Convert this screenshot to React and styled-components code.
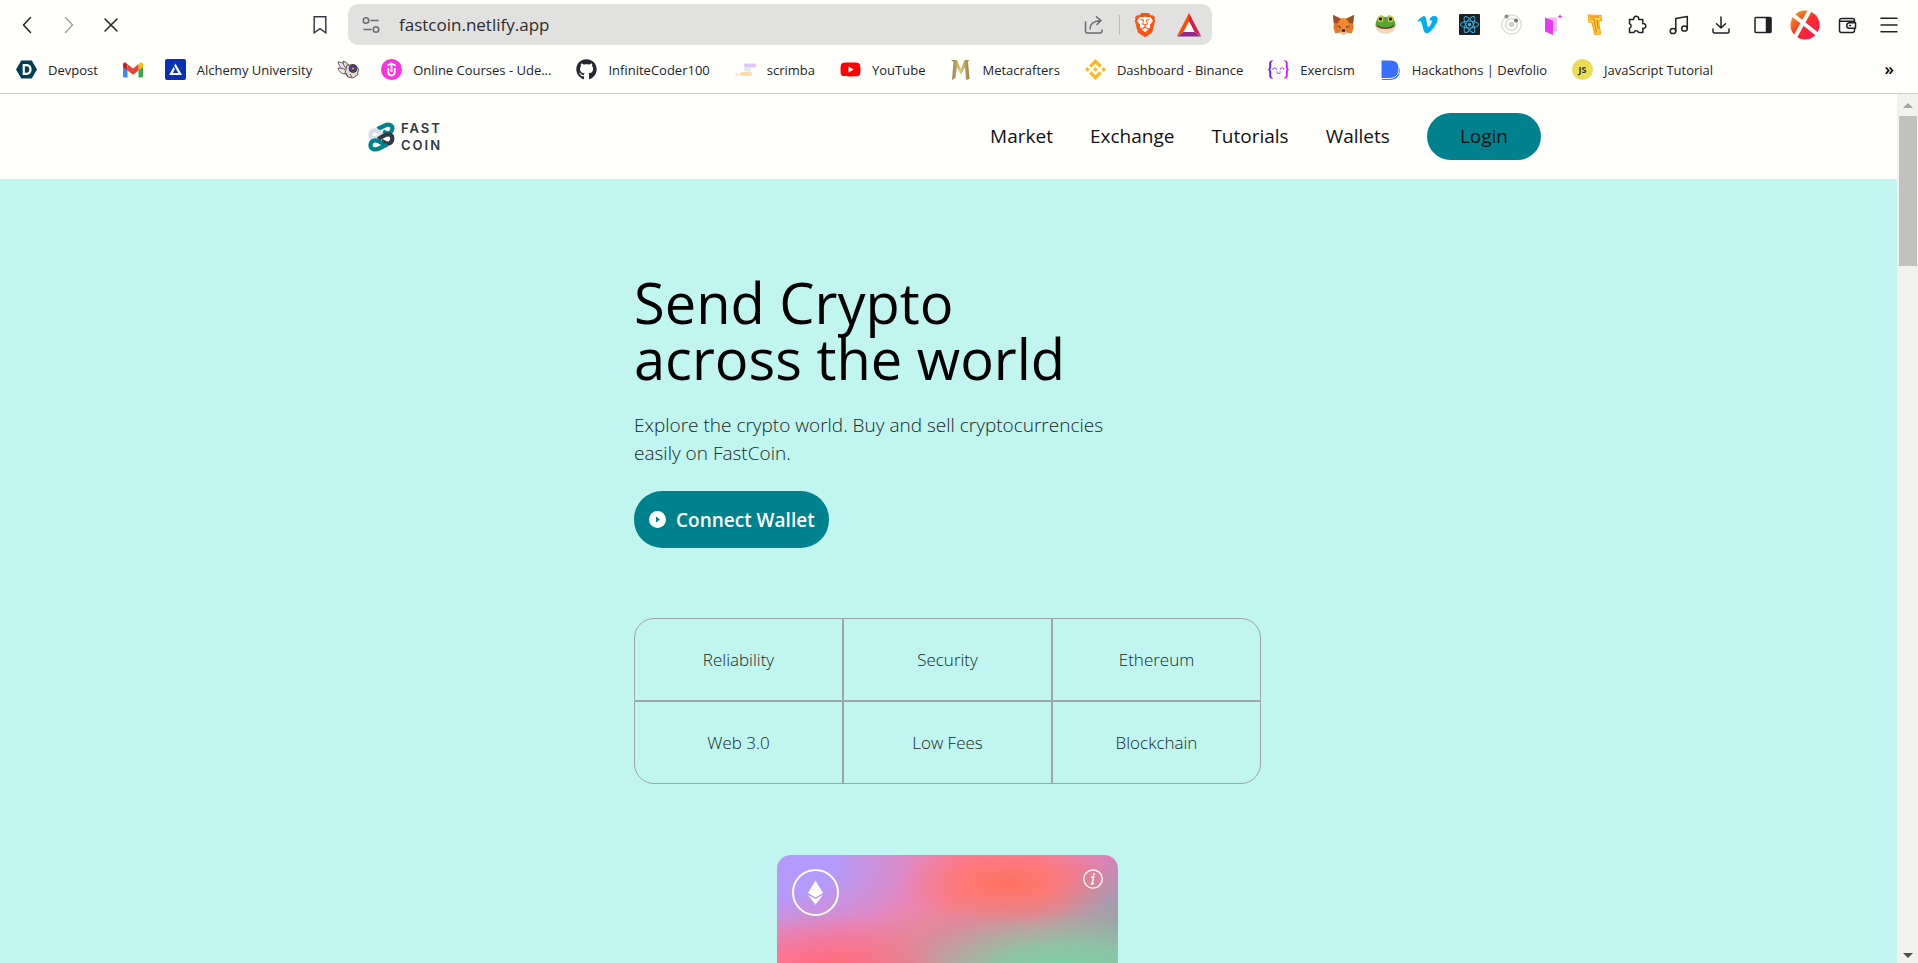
import React from "react";
import styled, { createGlobalStyle } from "styled-components";
import {
  SiDevpost,
  SiBinance,
  SiExercism,
  SiBrave,
  SiReact,
} from "react-icons/si";
import { FaYoutube, FaGithub, FaVimeoV } from "react-icons/fa";

const GlobalStyle = createGlobalStyle`
  * { box-sizing: border-box; }
  body {
    margin: 0;
    font-family: "Open Sans", "Noto Sans", sans-serif;
    color: #000;
    background: #fffffb;
  }
  button, input { font: inherit; color: inherit; }
  a { color: inherit; text-decoration: none; }
`;

/* ---------- browser frame ---------- */

const Window = styled.div`
  display: flex;
  flex-direction: column;
  height: 100vh;
  overflow: hidden;
`;

const Chrome = styled.header`
  flex: none;
  border-bottom: 1px solid #c8c8c6;
`;

const Toolbar = styled.div`
  display: flex;
  align-items: center;
  height: 46px;
  padding: 4px 8px 1px 6px;
`;

const ButtonGroup = styled.div`
  display: flex;
  align-items: center;
  margin-right: ${(p) => (p.$wide ? "167px" : "0")};
  margin-left: ${(p) => (p.$end ? "auto" : "0")};
`;

const ToolButton = styled.button`
  display: flex;
  align-items: center;
  justify-content: center;
  flex: none;
  width: ${(p) => (p.$wide ? "44px" : "42px")};
  height: 40px;
  padding: 0;
  border: 0;
  background: none;
  color: ${(p) => p.$color || "#202124"};
`;

const AddressBar = styled.div`
  display: flex;
  align-items: center;
  flex: 0 1 864px;
  height: 41px;
  margin-left: 7px;
  padding: 0 1px 0 2px;
  border-radius: 10px;
  background: #e1e1df;
`;

const AddressInput = styled.input`
  flex: 1;
  min-width: 0;
  padding: 0 7px;
  border: 0;
  outline: 0;
  background: none;
  font-size: 17px;
  color: #2b2c2e;
`;

const Divider = styled.span`
  width: 1px;
  height: 20px;
  margin: 0 3px;
  background: #bcbcba;
`;

const BookmarkBar = styled.nav`
  display: flex;
  align-items: center;
  gap: 22px;
  height: 47px;
  padding: 0 24px 0 16px;
`;

const Bookmark = styled.a`
  display: flex;
  align-items: center;
  gap: 11px;
  flex: none;
  font-size: 13px;
  line-height: 20px;
  color: #222325;
  white-space: nowrap;
  svg { flex: none; }
  span { padding-right: 3px; }
`;

const MoreButton = styled.button`
  margin-left: auto;
  padding: 0 0 2px;
  border: 0;
  background: none;
  font-size: 17px;
  font-weight: 600;
  line-height: 20px;
`;

const Viewport = styled.div`
  display: flex;
  flex: 1;
  min-height: 0;
`;

const ScrollTrack = styled.div`
  display: flex;
  flex-direction: column;
  align-items: center;
  flex: none;
  width: 21px;
  padding: 9px 1px 5px 2px;
  background: #f1f1ef;
`;

const ScrollThumb = styled.div`
  align-self: stretch;
  height: 150px;
  margin-top: 8px;
  margin-bottom: auto;
  background: #c1c1bf;
`;

/* ---------- site ---------- */

const Page = styled.div`
  flex: 1;
  min-width: 0;
  overflow: hidden;
  background: #c1f5f0;
`;

const SiteHeader = styled.header`
  display: flex;
  align-items: center;
  justify-content: space-between;
  height: 85px;
  padding: 0 356px 0 368px;
  background: #fffffb;
`;

const Logo = styled.a`
  display: flex;
  align-items: center;
  gap: 6px;
`;

const LogoName = styled.span`
  display: flex;
  flex-direction: column;
  font-family: Inter, "Open Sans", sans-serif;
  font-size: 13px;
  font-weight: 600;
  line-height: 17px;
  letter-spacing: 2px;
  color: #2f3944;
`;

const SiteNav = styled.nav`
  display: flex;
  align-items: center;
  gap: 37px;
  font-size: 19px;
  line-height: 28px;
  color: #111;
`;

const NavLink = styled.a`
  padding-bottom: 2px;
`;

const LoginButton = styled.button`
  height: 47px;
  padding: 0 33px 2px;
  border: 0;
  border-radius: 24px;
  background: #00828e;
`;

const Hero = styled.main`
  display: flex;
  flex-direction: column;
  align-items: flex-start;
  width: 629px;
  max-width: 100%;
  margin: 0 auto;
  padding: 95px 2px 0 0;
`;

const Title = styled.h1`
  margin: 0 0 25px;
  font-size: 56px;
  font-weight: 400;
  line-height: 56px;
`;

const Intro = styled.p`
  max-width: 500px;
  margin: 0 0 24px;
  font-size: 19px;
  font-weight: 300;
  line-height: 28px;
  color: #182626;
`;

const ConnectButton = styled.button`
  display: flex;
  align-items: center;
  gap: 10px;
  height: 57px;
  padding: 0 14px 0 15px;
  border: 0;
  border-radius: 28px;
  background: #00828e;
  color: #fffffb;
  font-size: 19px;
  font-weight: 600;
`;

const Features = styled.ul`
  display: grid;
  grid-template-columns: repeat(3, 1fr);
  align-self: stretch;
  margin: 70px 0 71px;
  padding: 0;
  list-style: none;
`;

const Feature = styled.li`
  display: flex;
  align-items: center;
  justify-content: center;
  height: 83px;
  border: 1px solid #9ea3ae;
  border-radius: ${(p) => p.$radius || "0"};
  font-size: 17px;
  font-weight: 300;
  color: #182626;
`;

const CoinCard = styled.section`
  display: flex;
  align-items: flex-start;
  justify-content: space-between;
  align-self: center;
  width: 341px;
  height: 215px;
  padding: 14px 15px;
  border-radius: 14px;
  color: #fffffb;
  background:
    radial-gradient(ellipse 110px 42px at 230px 28px, #ff7260 0%, #ff7462bb 30%, #ff746200 100%),
    radial-gradient(ellipse 110px 60px at 55px 118px, #ff6a7c 0%, #ff6a7c00 100%),
    radial-gradient(ellipse 235px 92px at 285px 118px, #76d7a4 0%, #80cda5dd 30%, #a8a39c77 65%, #c0989a00 100%),
    radial-gradient(ellipse 90px 62px at 350px 66px, #8aa6b8 0%, #9c9db600 100%),
    radial-gradient(ellipse 90px 100px at 350px 0px, #cb85c0 0%, #cb85c000 100%),
    radial-gradient(ellipse 190px 100px at 0px 10px, #b49afb 0%, #b49afb 30%, #b49afb00 100%),
    #ff7c9a;
`;

/* ---------- icons ---------- */

const Line = ({ size = 20, width = 1.5, children, ...rest }) => (
  <svg
    width={size}
    height={size}
    viewBox="0 0 20 20"
    fill="none"
    stroke="currentColor"
    strokeWidth={width}
    strokeLinejoin="round"
    strokeLinecap="round"
    aria-hidden="true"
    {...rest}
  >
    {children}
  </svg>
);

const BackIcon = () => <Line><path d="M13.5 2.5 6.5 10l7 7.5" /></Line>;
const ForwardIcon = () => <Line><path d="m6.500 2.500 7 7.500-7 7.500" /></Line>;
const StopIcon = () => <Line><path d="m4 4 12 12M16 4 4 16" /></Line>;
const BookmarkIcon = () => (
  <Line><path strokeLinejoin="miter" d="M4.200 1.800h11.600v16L10 13.600 4.200 17.800z" /></Line>
);
const SiteInfoIcon = () => (
  <Line width={1.6}>
    <circle cx="5" cy="5.500" r="2.700" />
    <path d="M10 5.500h7M3 14.500h7" />
    <circle cx="15" cy="14.500" r="2.700" />
  </Line>
);
const ShareIcon = () => (
  <Line size={20}>
    <path d="M1.500 7v9a2 2 0 0 0 2 2h12.500a2 2 0 0 0 2-2v-1" />
    <path d="M6 14c0-5 3.500-8 10.500-8.500M12.500 1.800l4.500 3.700-4 4" />
  </Line>
);
const BraveIcon = () => (
  <svg width="24" height="24" viewBox="0 0 24 24" aria-hidden="true">
    <path d="M5 4h14l1.500 8-3 7L12 22l-5.500-3-3-7z" fill="#fff" />
    <SiBrave size={24} color="#fb5412" />
  </svg>
);
const BatIcon = () => (
  <svg width="24" height="24" viewBox="0 0 24 24" aria-hidden="true">
    <path d="M12 0 0 23l6.500-4L12 8.500z" fill="#ff4a00" />
    <path d="M12 0v8.500L17.500 19l6.500 4z" fill="#d1204f" />
    <path d="M0 23.500 6.500 19h11l6.500 4.500z" fill="#8f2a92" />
    <path d="m12 8.500-5.500 10.500h11z" fill="#fff" />
  </svg>
);
const FoxIcon = () => (
  <svg width="21" height="21" viewBox="0 0 21 21" aria-hidden="true">
    <path d="m0 1 8 3.500h5L21 1l-1 8 .6 5-2 5.500-5-1-2 2H9.400l-2-2-5 1L.4 14 1 9z" fill="#e8792a" />
    <path d="m0 1 8 4-3 4-4.200.500zM21 1l-8 4 3 4 4.200.500z" fill="#9c4d2b" />
    <path d="m5 9 3-4.500h5L16 9l-2 6H7z" fill="#f08a2c" />
    <path d="m4 11.500 4 1.200-.5 1.500zM17 11.500l-4 1.200.5 1.500z" fill="#3a3a4a" />
    <path d="m7.500 17 1.500-1h3l1.500 1-1 3h-4z" fill="#d8c4b4" />
    <path d="M9 15.500h3l.4 2.200H8.600z" fill="#222831" />
  </svg>
);
const FrogIcon = () => (
  <svg width="21" height="21" viewBox="0 0 21 21" aria-hidden="true">
    <ellipse cx="10.500" cy="12.500" rx="10" ry="7.500" fill="#eed9bd" />
    <path d="M.5 11.500C.500 8 1.500 7 2 5.500a4 4 0 0 1 7-2.500 6 6 0 0 1 3 0 4 4 0 0 1 7 2.500c.5 1.500 1.500 2.500 1.500 6-2 3.500-18 3.500-20 0z" fill="#51a832" />
    <circle cx="5.500" cy="5" r="2.900" fill="#e7d24a" />
    <circle cx="15.500" cy="5" r="2.900" fill="#e7d24a" />
    <circle cx="5.500" cy="5" r="1.800" fill="#222" />
    <circle cx="15.500" cy="5" r="1.800" fill="#222" />
    <path d="M2 11.500c3 3.600 14 3.600 17 0" fill="none" stroke="#81342e" strokeWidth="1.400" />
  </svg>
);
const VimeoIcon = () => (
  <svg width="21" height="21" viewBox="0 0 21 21" aria-hidden="true">
    <FaVimeoV x="-1" y="-1" size={23} color="#00adef" />
  </svg>
);
const ReactTile = () => (
  <svg width="21" height="21" viewBox="0 0 21 21" aria-hidden="true">
    <rect width="21" height="21" rx="1" fill="#202022" />
    <SiReact x="1" y="1" size={19} color="#38b6e8" />
  </svg>
);
const OrbitIcon = () => (
  <svg width="21" height="21" viewBox="0 0 21 21" fill="none" aria-hidden="true">
    <circle cx="10.500" cy="10.500" r="9.700" stroke="#d8d8d6" strokeWidth="1.300" />
    <circle cx="10.500" cy="10.500" r="5.800" stroke="#d0d0ce" strokeWidth="1.300" />
    <circle cx="10.500" cy="10.500" r="2.800" fill="#d0d0ce" />
    <circle cx="5.500" cy="2.500" r="2" fill="#8c8c8c" />
    <circle cx="15" cy="6.500" r="2" fill="#777" />
  </svg>
);
const DoorIcon = () => (
  <svg width="21" height="21" viewBox="0 0 21 21" aria-hidden="true">
    <path d="M5 3.500h9V17H5z" fill="#f3b7f4" />
    <path d="m2 3.500 8 3.200V21l-8-3.500z" fill="#e63af0" />
    <path d="m17 0 .7 1.800 1.800.700-1.800.700L17 5l-.7-1.800-1.800-.7 1.800-.7z" fill="#d83be0" />
  </svg>
);
const HammerIcon = () => (
  <svg width="21" height="21" viewBox="0 0 21 21" aria-hidden="true">
    <path d="m3.500 1 12.500.500.5 5-3 .8 2 12.700-5.500.5L7 8.500l-3-.5z" fill="#ffd83a" stroke="#f9a01f" strokeWidth="1.200" />
    <path d="M5 3h9.500M5.500 5.500l3.500-.500 2.500 13.500M12 6l1 9" fill="none" stroke="#ee6a1e" strokeWidth="1" />
  </svg>
);
const PuzzleIcon = () => (
  <Line>
    <path d="M2.500 4.500h4.200a2.600 2.600 0 1 1 5 0h4.100v4.200a2.400 2.400 0 1 1 0 4.600v4.200h-4.200a2.500 2.500 0 0 0-4.700 0H2.500v-4.300a2.300 2.300 0 0 0 0-4.400z" />
  </Line>
);
const MusicIcon = () => (
  <Line>
    <ellipse cx="4" cy="16" rx="2.800" ry="2.600" />
    <ellipse cx="15.500" cy="13.500" rx="2.800" ry="2.600" />
    <path d="M6.800 16V3.500l11.500-2v12" />
  </Line>
);
const DownloadIcon = () => (
  <Line><path d="M10 2v11m-4.500-4.200L10 13l4.500-4.200M2 14v2.500A1.500 1.500 0 0 0 3.500 18h13a1.500 1.500 0 0 0 1.500-1.500V14" /></Line>
);
const SidebarIcon = () => (
  <Line><rect x="2" y="2.500" width="16" height="15" rx="1" /><path d="M13.500 3h4v14h-4z" fill="currentColor" /></Line>
);
const ProfileIcon = () => (
  <svg width="30" height="30" viewBox="0 0 30 30" aria-hidden="true">
    <defs>
      <linearGradient id="profile" x1="0" y1="0" x2="1" y2="1">
        <stop offset="0.150" stopColor="#f78a1f" />
        <stop offset="0.500" stopColor="#fb2b2b" />
        <stop offset="1" stopColor="#ff1560" />
      </linearGradient>
    </defs>
    <circle cx="15" cy="15" r="14.500" fill="url(#profile)" />
    <path d="m3 5 24 19M20 0 4 29" stroke="#fffffb" strokeWidth="4" />
  </svg>
);
const WalletIcon = () => (
  <Line>
    <path d="M17.500 7V5.500a2 2 0 0 0-2-2h-11a2 2 0 0 0-2 2v10a2 2 0 0 0 2 2h11a2 2 0 0 0 2-2V14M2.500 6.200h15" />
    <path d="M18.500 7.800h-6a2.700 2.700 0 0 0 0 5.500h6z" /><path d="M12.500 10.500h1" />
  </Line>
);
const MenuIcon = () => <Line><path d="M2 3.200h16M2 10h16M2 16.800h16" /></Line>;

const GmailIcon = () => (
  <svg width="20" height="20" viewBox="0 0 20 20" aria-hidden="true">
    <path d="M0 5.500 4.500 8v9.500h-3A1.500 1.500 0 0 1 0 16z" fill="#4285f4" />
    <path d="M20 5.500 15.500 8v9.500h3A1.500 1.500 0 0 0 20 16z" fill="#34a853" />
    <path d="M15.500 4.500 17 3c1.500-1 3 0 3 1.700V7l-4.500 3.500z" fill="#fbbc04" />
    <path d="M0 7V4.700C0 3 1.500 2 3 3l1.500 1.500v6z" fill="#c5221f" />
    <path d="M4.500 4.200 10 8.500l5.500-4.300v6.300L10 14.700l-5.500-4.200z" fill="#ea4335" />
  </svg>
);
const AlchemyIcon = () => (
  <svg width="21" height="21" viewBox="0 0 21 21" aria-hidden="true">
    <rect width="21" height="21" rx="2" fill="#0731b5" />
    <path d="M10.500 4.500 17 16h-2.600L9.200 6.800zM8.600 8l1.300 2.300-2.100 3.700h5.300l1.200 2H4.100z" fill="#fffffb" />
  </svg>
);
const BeeIcon = () => (
  <svg width="22" height="20" viewBox="0 0 22 20" stroke="#3d3538" strokeWidth="0.800" aria-hidden="true">
    <path d="M1 2c5 0 8 3 10 6l-2 3C5 10 2 6 1 2z" fill="#e9e2e0" />
    <path d="M6 1c4 1 6 4 7 7l-3 1C7 7 6 4 6 1z" fill="#e4dede" />
    <path d="M1 8c4 0 7 1 9 3l-2 3c-3 0-6-2-7-6z" fill="#efe9e4" />
    <path d="M10 5h8l3.500 4-1 6-4.500 3-5-1-3-4z" fill="#e3d9d4" />
    <circle cx="16" cy="8.500" r="4" fill="#4a3a9a" />
    <circle cx="16" cy="8.500" r="1.500" fill="#e6b83a" />
    <path d="m9 13 2 4M13 14l2 3" fill="none" />
  </svg>
);
const UdemyIcon = () => (
  <svg width="21" height="21" viewBox="0 0 21 21" aria-hidden="true">
    <circle cx="10.500" cy="10.500" r="10.500" fill="#f733e0" />
    <path d="M6.300 6.800 10.500 4.300l4.200 2.500M7.300 9v4.300a3.200 3.200 0 0 0 6.400 0V9M10.500 4.500v8.500" fill="none" stroke="#fffffb" strokeWidth="1.800" />
  </svg>
);
const ScrimbaIcon = () => (
  <svg width="21" height="20" viewBox="0 0 21 20" aria-hidden="true">
    <rect x="9" y="3.500" width="12" height="4" rx="1.500" fill="#e0c5fa" />
    <rect x="9" y="8" width="7" height="3.500" rx="1.500" fill="#d8eee6" />
    <rect x="5" y="12" width="12" height="4" rx="1.500" fill="#fbdcae" />
    <circle cx="2" cy="14.500" r="1.700" fill="#fbe3c0" />
  </svg>
);
const MetaIcon = () => (
  <svg width="21" height="22" viewBox="0 0 21 22" aria-hidden="true">
    <defs>
      <linearGradient id="gold"><stop stopColor="#8f7b3e" /><stop offset="0.500" stopColor="#dcc980" /><stop offset="1" stopColor="#97813e" /></linearGradient>
    </defs>
    <path d="M1 1h6l4 9 3.500-9H19l-1 2 1.500 17-3.500 1-1-13-4 8-4-8L5.500 19 2 21l1.500-18z" fill="url(#gold)" />
  </svg>
);
const ExercismIcon = () => (
  <svg width="21" height="21" viewBox="0 0 21 21" aria-hidden="true">
    <defs>
      <linearGradient id="exercism" x1="0" x2="1"><stop offset="0.200" stopColor="#6a1bf5" /><stop offset="0.900" stopColor="#d41de8" /></linearGradient>
    </defs>
    <SiExercism size={21} fill="url(#exercism)" />
  </svg>
);
const DevfolioIcon = () => (
  <svg width="21" height="22" viewBox="0 0 21 22" aria-hidden="true">
    <path d="M2 19v2h8c6 0 10-4 10-10V9z" fill="#3770ff" />
    <path d="M1 1h9c6 0 9 3 9 9s-4 9.500-10 9.500H1z" fill="#3770ff" stroke="#fffffb" strokeWidth="1" />
  </svg>
);
const JsIcon = () => (
  <svg width="21" height="21" viewBox="0 0 21 21" aria-hidden="true">
    <circle cx="10.500" cy="10.500" r="10.500" fill="#ecdb54" />
    <text x="10.500" y="14" textAnchor="middle" fontSize="9" fontWeight="700" fill="#33321e">JS</text>
  </svg>
);

const FastCoinMark = () => (
  <svg width="27" height="30" viewBox="0 0 27 30" fill="none" strokeWidth="4.200" strokeLinejoin="round" aria-hidden="true">
    <path d="M9.500 7 17 3.500c4-2 7.800 0 7.300 3.500-.4 3.300-3.300 5-6.300 4l-3-1.500" stroke="#00828e" />
    <path d="M16 12.500 9.500 15.500c-4 2-7.300.5-7-3C2.800 9 5.800 7.500 9 8.800l4 2" stroke="#d5dde9" />
    <path d="m10 17 7-3.800c4-2 7.800 0 7.300 3.800-.4 4-3.800 5.500-7 4l-4-2" stroke="#2f3944" />
    <path d="m19 22.500-8 4c-4.500 2-8.800.5-8.500-3.500.300-4 4-5.500 7.500-4l5 2.700" stroke="#00828e" />
  </svg>
);
const PlayIcon = () => (
  <svg width="17" height="17" viewBox="0 0 17 17" aria-hidden="true">
    <circle cx="8.500" cy="8.500" r="8.500" fill="#fffffb" />
    <path d="m7 5.500 4 3-4 3z" fill="#00828e" />
  </svg>
);
const EthereumBadge = () => (
  <svg width="47" height="47" viewBox="0 0 47 47" aria-hidden="true">
    <circle cx="23.500" cy="23.500" r="22.500" fill="none" stroke="#fffffb" strokeWidth="2" />
    <path d="M23.500 11.500 31 24l-7.500 4.500L16 24z" fill="#fffffb" />
    <path d="m16 25.700 7.500 4.400 7.500-4.400-7.500 10z" fill="#fffffb" />
  </svg>
);
const InfoBadge = () => (
  <svg width="20" height="20" viewBox="0 0 20 20" aria-label="Info">
    <circle cx="10" cy="10" r="9.200" fill="none" stroke="#fffffb" strokeWidth="1.300" />
    <path d="m8 8.300 2.700-.5-1.500 6.200c-.2 1 .8.800 1.700 0M7.800 15h2.400" fill="none" stroke="#fffffb" strokeWidth="1.300" />
    <circle cx="10.800" cy="5.300" r="1.100" fill="#fffffb" />
  </svg>
);
const ScrollArrow = ({ down }) => (
  <svg width="10" height="5" viewBox="0 0 10 5" aria-hidden="true">
    <path d={down ? "M0 0h10L5 5z" : "M0 5h10L5 0z"} fill={down ? "#505050" : "#a3a3a1"} />
  </svg>
);

/* ---------- data ---------- */

const bookmarks = [
  { name: "Devpost", icon: <SiDevpost size={21} color="#003e54" />, text: true },
  { name: "Gmail", icon: <GmailIcon /> },
  { name: "Alchemy University", icon: <AlchemyIcon />, text: true },
  { name: "Bee", icon: <BeeIcon /> },
  { name: "Online Courses - Ude...", icon: <UdemyIcon />, text: true },
  { name: "InfiniteCoder100", icon: <FaGithub size={21} color="#24292f" />, text: true },
  { name: "scrimba", icon: <ScrimbaIcon />, text: true },
  { name: "YouTube", icon: <FaYoutube size={21} color="#ff0000" />, text: true },
  { name: "Metacrafters", icon: <MetaIcon />, text: true },
  { name: "Dashboard - Binance", icon: <SiBinance size={21} color="#f3ba2f" />, text: true },
  { name: "Exercism", icon: <ExercismIcon />, text: true },
  { name: "Hackathons | Devfolio", icon: <DevfolioIcon />, text: true },
  { name: "JavaScript Tutorial", icon: <JsIcon />, text: true },
];

const extensions = [
  ["MetaMask", <FoxIcon />],
  ["Frog", <FrogIcon />],
  ["Vimeo", <VimeoIcon />],
  ["React Developer Tools", <ReactTile />],
  ["Orbit", <OrbitIcon />],
  ["Door", <DoorIcon />],
  ["Builder", <HammerIcon />],
  ["Extensions", <PuzzleIcon />],
  ["Playlist", <MusicIcon />],
  ["Downloads", <DownloadIcon />],
  ["Sidebar", <SidebarIcon />],
  ["Profile", <ProfileIcon />],
  ["Wallet", <WalletIcon />],
  ["Menu", <MenuIcon />],
];

const features = [
  ["Reliability", "20px 0 0 0"],
  ["Security"],
  ["Ethereum", "0 20px 0 0"],
  ["Web 3.0", "0 0 0 20px"],
  ["Low Fees"],
  ["Blockchain", "0 0 20px 0"],
];

const links = ["Market", "Exchange", "Tutorials", "Wallets"];

export default function App() {
  return (
    <Window>
      <GlobalStyle />
      <Chrome>
        <Toolbar>
          <ButtonGroup $wide>
            <ToolButton aria-label="Back"><BackIcon /></ToolButton>
            <ToolButton aria-label="Forward" $color="#a0a0a0"><ForwardIcon /></ToolButton>
            <ToolButton aria-label="Stop"><StopIcon /></ToolButton>
          </ButtonGroup>
          <ToolButton aria-label="Bookmark this page" $color="#3a3b44"><BookmarkIcon /></ToolButton>
          <AddressBar>
            <ToolButton aria-label="Site settings" $color="#6b6c70"><SiteInfoIcon /></ToolButton>
            <AddressInput aria-label="Address" defaultValue="fastcoin.netlify.app" />
            <ToolButton $wide aria-label="Share" $color="#6b6c70"><ShareIcon /></ToolButton>
            <Divider />
            <ToolButton $wide aria-label="Brave Shields"><BraveIcon /></ToolButton>
            <ToolButton $wide aria-label="Brave Rewards"><BatIcon /></ToolButton>
          </AddressBar>
          <ButtonGroup $end>
            {extensions.map(([name, icon]) => (
              <ToolButton key={name} aria-label={name}>{icon}</ToolButton>
            ))}
          </ButtonGroup>
        </Toolbar>
        <BookmarkBar aria-label="Bookmarks">
          {bookmarks.map((b) => (
            <Bookmark key={b.name} href="#" aria-label={b.name}>
              {b.icon}
              {b.text && <span>{b.name}</span>}
            </Bookmark>
          ))}
          <MoreButton aria-label="More bookmarks">»</MoreButton>
        </BookmarkBar>
      </Chrome>

      <Viewport>
        <Page>
          <SiteHeader>
            <Logo href="#" aria-label="Fast Coin">
              <FastCoinMark />
              <LogoName><span>FAST</span><span>COIN</span></LogoName>
            </Logo>
            <SiteNav>
              {links.map((l) => <NavLink key={l} href="#">{l}</NavLink>)}
              <LoginButton>Login</LoginButton>
            </SiteNav>
          </SiteHeader>

          <Hero>
            <Title>Send Crypto<br />across the world</Title>
            <Intro>Explore the crypto world. Buy and sell cryptocurrencies easily on FastCoin.</Intro>
            <ConnectButton><PlayIcon />Connect Wallet</ConnectButton>
            <Features>
              {features.map(([name, radius]) => (
                <Feature key={name} $radius={radius}>{name}</Feature>
              ))}
            </Features>
            <CoinCard>
              <EthereumBadge />
              <InfoBadge />
            </CoinCard>
          </Hero>
        </Page>
        <ScrollTrack>
          <ScrollArrow />
          <ScrollThumb />
          <ScrollArrow down />
        </ScrollTrack>
      </Viewport>
    </Window>
  );
}
